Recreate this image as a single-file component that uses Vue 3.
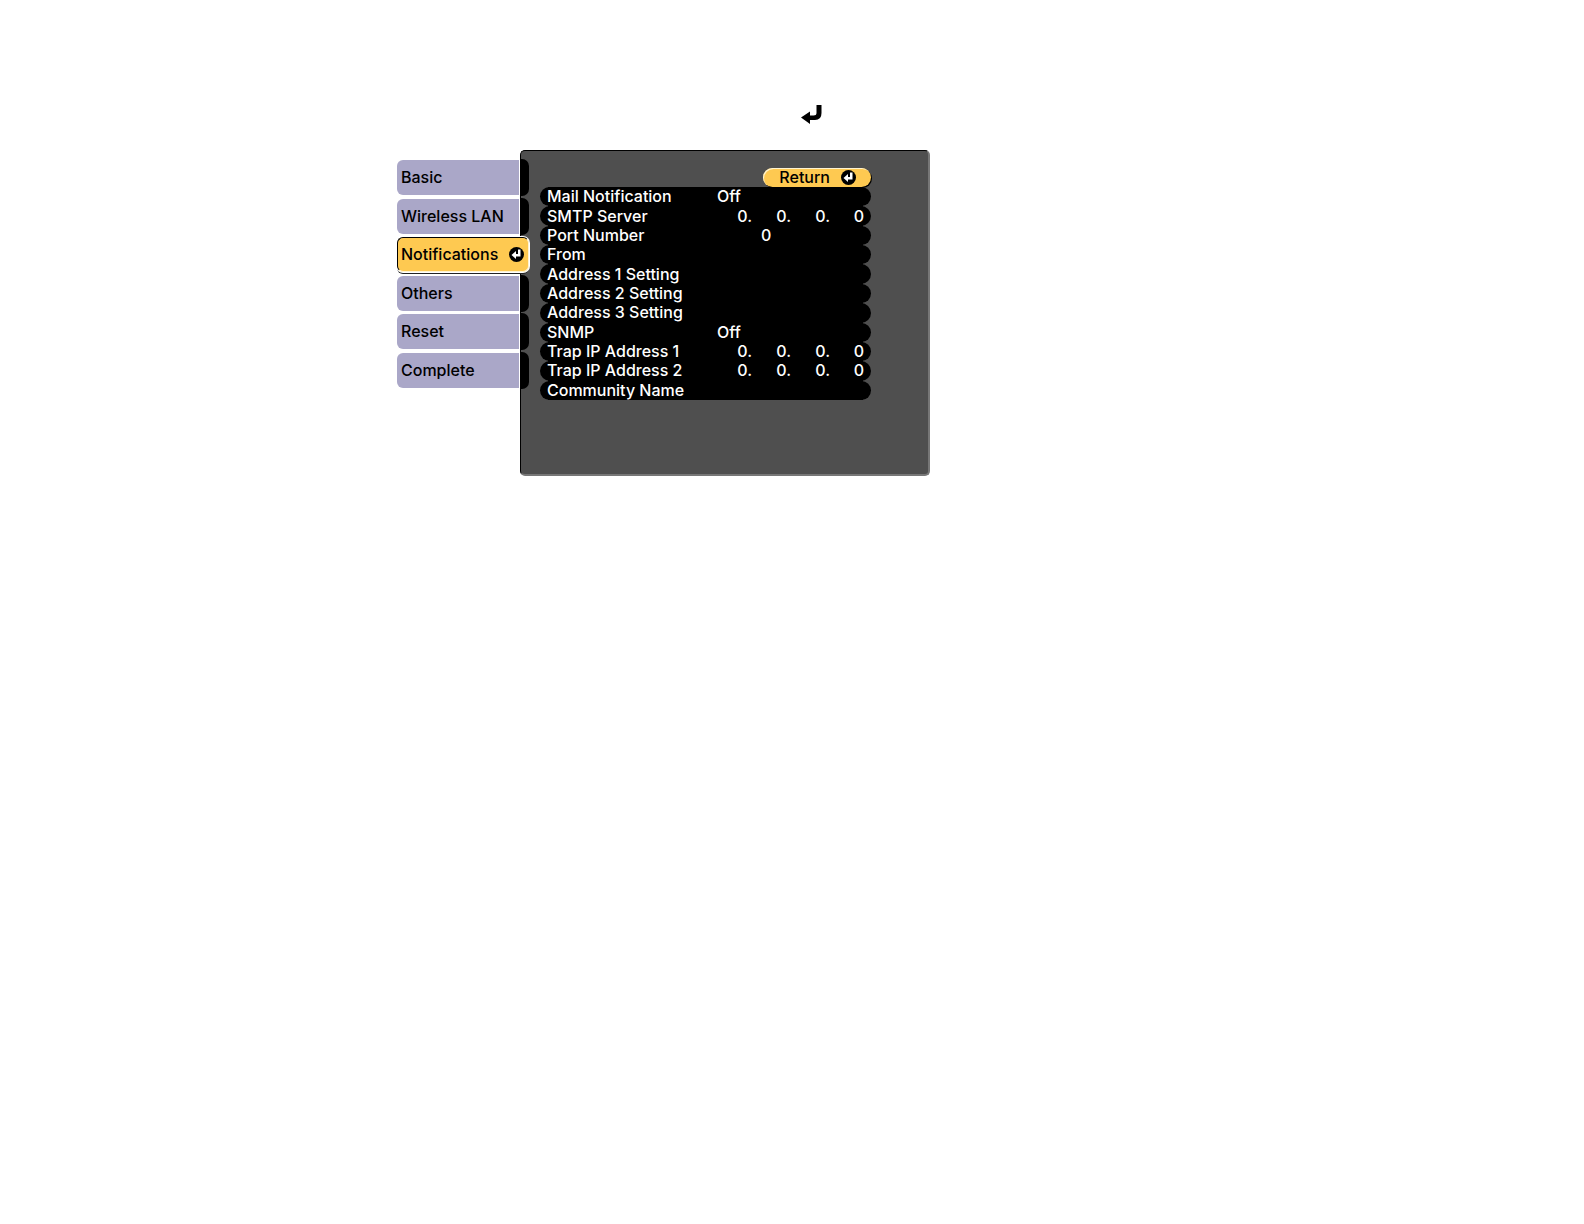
<script setup>
import { ref } from 'vue'

const tabs = ['Basic', 'Wireless LAN', 'Notifications', 'Others', 'Reset', 'Complete']
const active = ref('Notifications')

const emptyAddress = ['0.', '0.', '0.', '0']
const settings = [
  { label: 'Mail Notification', text: 'Off' },
  { label: 'SMTP Server', address: emptyAddress },
  { label: 'Port Number', number: '0' },
  { label: 'From' },
  { label: 'Address 1 Setting' },
  { label: 'Address 2 Setting' },
  { label: 'Address 3 Setting' },
  { label: 'SNMP', text: 'Off' },
  { label: 'Trap IP Address 1', address: emptyAddress },
  { label: 'Trap IP Address 2', address: emptyAddress },
  { label: 'Community Name' }
]
</script>

<template>
  <main class="page">
    <div class="hint">
      <svg class="hint-icon" width="22" height="20" viewBox="0 0 22 20" role="img" aria-label="Enter">
        <path d="M15.500 0H20.500V8Q20.500 15 14 15H9V19L0 12.500L9 6.500V10.500H12.500Q15.500 10.500 15.500 8Z" fill="#000" />
      </svg>
    </div>
    <div class="screen">
      <nav class="tabs">
        <button
          v-for="tab in tabs"
          :key="tab"
          type="button"
          class="tab"
          :class="{ active: tab === active }"
          @click="active = tab"
        >
          <span>{{ tab }}</span>
          <svg v-if="tab === active" class="enter" width="15" height="15" viewBox="0 0 15 15" aria-hidden="true">
            <circle cx="7.500" cy="7.500" r="7.500" fill="#000" />
            <path d="M9 2.500H11.500V9.500H7V12L2.500 8L7 4V7H9Z" fill="#fff" />
          </svg>
        </button>
      </nav>
      <section class="panel">
        <div class="content">
          <button type="button" class="return">
            <span>Return</span>
            <svg class="enter" width="15" height="15" viewBox="0 0 15 15" aria-hidden="true">
              <circle cx="7.500" cy="7.500" r="7.500" fill="#000" />
              <path d="M9 2.500H11.500V9.500H7V12L2.500 8L7 4V7H9Z" fill="#fff" />
            </svg>
          </button>
          <ul class="list">
            <li v-for="item in settings" :key="item.label" class="item">
              <button type="button" class="row">
                <span class="label">{{ item.label }}</span>
                <span v-if="item.text">{{ item.text }}</span>
                <span v-else-if="item.number" class="number">{{ item.number }}</span>
                <span v-else-if="item.address" class="address">
                  <span v-for="(part, i) in item.address" :key="i" class="octet">{{ part }}</span>
                </span>
              </button>
            </li>
          </ul>
        </div>
      </section>
    </div>
  </main>
</template>

<style>
body {
  background: #fff;
}
</style>

<style scoped>
.page {
  padding: 105px 0 48px 25%;
  font-family: Inter, "Liberation Sans", sans-serif;
  font-size: 16px;
  font-weight: 500;
  line-height: 19px;
}

.hint {
  height: 45px;
  padding-left: 405px;
}

.hint-icon,
.enter {
  display: block;
  flex: none;
}

.screen {
  display: flex;
  align-items: flex-start;
}

button {
  border: 0;
  margin: 0;
  padding: 0;
  font: inherit;
  text-align: left;
  white-space: nowrap;
  cursor: pointer;
}

.tabs {
  position: relative;
  z-index: 1;
  display: flex;
  flex-direction: column;
  justify-content: space-between;
  width: 124px;
  height: 228px;
  margin-top: 10px;
  padding-left: 1px;
  box-sizing: border-box;
}

.tab {
  position: relative;
  display: flex;
  align-items: center;
  justify-content: space-between;
  width: 122px;
  height: 35px;
  padding-left: 4px;
  border-radius: 6px 0 0 6px;
  background: #aaa7c8;
  color: #000;
}

.tab::after {
  content: "";
  position: absolute;
  left: 124px;
  top: -1px;
  width: 8px;
  height: 37px;
  border-radius: 0 7px 7px 0;
  background: #000;
}

.tab.active {
  width: 132px;
  padding: 0 4px 0 3px;
  border: 1px solid #000;
  border-right-color: #fff3cf;
  border-bottom-color: #fff3cf;
  border-radius: 6px;
  background: #fec951;
  box-shadow: 0 0 0 1px #fff, 0 2px 0 #222;
}

.tab.active::after {
  display: none;
}

.panel {
  width: 410px;
  min-height: 326px;
  padding: 17px 0 0 19px;
  box-sizing: border-box;
  border: 1px solid #000;
  border-right: 2px solid #777;
  border-bottom: 2px solid #777;
  border-radius: 5px;
  background: #4f4f4f;
}

.content {
  display: flex;
  flex-direction: column;
  width: 331px;
}

.return {
  display: flex;
  align-items: center;
  align-self: flex-end;
  gap: 11px;
  height: 19px;
  padding: 0 15px 0 16px;
  border-radius: 10px;
  background: #fec951;
  color: #000;
  box-shadow: inset 1px 1px 0 #fff3cf, 1px 1px 0 #000;
}

.list {
  display: grid;
  grid-auto-rows: 1fr;
  height: 213px;
  margin: 0;
  padding: 0;
  list-style: none;
  background: linear-gradient(#000, #000) center / 315px 100% no-repeat;
}

.item {
  display: flex;
  min-height: 0;
}

.row {
  display: flex;
  align-items: center;
  flex: 1;
  padding: 0 7px;
  border-radius: 10px;
  background: #000;
  color: #fff;
}

.label {
  width: 170px;
}

.number {
  padding-left: 44px;
}

.address {
  display: flex;
  flex: 1;
  justify-content: flex-end;
}

.octet {
  width: 39px;
  text-align: right;
}

.octet:first-child {
  width: auto;
}

.octet:last-child {
  width: 34px;
}
</style>
